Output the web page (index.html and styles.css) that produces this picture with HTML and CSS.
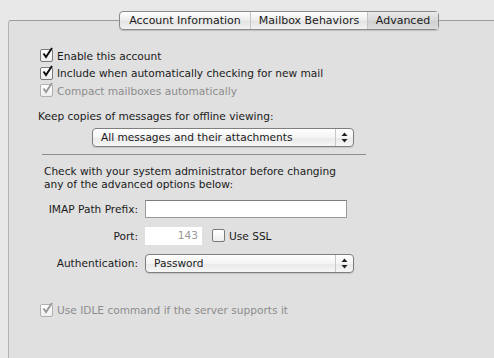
FILE: index.html
```html
<!DOCTYPE html>
<html lang="en">
<head>
    <meta charset="UTF-8">
    <title>Advanced</title>
    <link rel="stylesheet" href="styles.css">
</head>
<body>
    <div class="tabs">
        <div class="tab">Account Information</div>
        <div class="tab">Mailbox Behaviors</div>
        <div class="tab selected">Advanced</div>
    </div>

    <div class="panel">
        <div class="check-list">
            <label class="check">
                <span class="box checked"><svg viewBox="0 0 13 13"><path d="M2.5 6.5 L5 10 L11 1" /></svg></span>
                Enable this account
            </label>
            <label class="check">
                <span class="box checked"><svg viewBox="0 0 13 13"><path d="M2.5 6.5 L5 10 L11 1" /></svg></span>
                Include when automatically checking for new mail
            </label>
            <label class="check disabled">
                <span class="box checked"><svg viewBox="0 0 13 13"><path d="M2.5 6.5 L5 10 L11 1" /></svg></span>
                Compact mailboxes automatically
            </label>
        </div>

        <p class="caption">Keep copies of messages for offline viewing:</p>

        <div class="popup wide">
            <span class="popup-text">All messages and their attachments</span>
            <span class="popup-arrows"><svg viewBox="0 0 7 11"><path d="M3.5 0.5 L6.5 4 L0.5 4 Z M0.5 7 L6.5 7 L3.5 10.5 Z" /></svg></span>
        </div>

        <hr class="separator">

        <p class="note">Check with your system administrator before changing<br>any of the advanced options below:</p>

        <div class="form">
            <div class="row">
                <span class="label">IMAP Path Prefix:</span>
                <span class="field prefix"></span>
            </div>
            <div class="row">
                <span class="label">Port:</span>
                <span class="field port">143</span>
                <label class="check ssl">
                    <span class="box"></span>
                    Use SSL
                </label>
            </div>
            <div class="row">
                <span class="label">Authentication:</span>
                <div class="popup auth">
                    <span class="popup-text">Password</span>
                    <span class="popup-arrows"><svg viewBox="0 0 7 11"><path d="M3.5 0.5 L6.5 4 L0.5 4 Z M0.5 7 L6.5 7 L3.5 10.5 Z" /></svg></span>
                </div>
            </div>
        </div>

        <label class="check disabled idle">
            <span class="box checked"><svg viewBox="0 0 13 13"><path d="M2.5 6.5 L5 10 L11 1" /></svg></span>
            Use IDLE command if the server supports it
        </label>
    </div>
</body>
</html>
```

FILE: styles.css
```css
* {
    margin: 0;
    padding: 0;
    box-sizing: border-box;
}

body {
    background: #e8e8e8;
    font-family: 'DejaVu Sans', sans-serif;
    font-size: 10.6px;
    color: #1a1a1a;
    height: 100vh;
    overflow: hidden;
    display: flex;
    flex-direction: column;
}

.tabs {
    display: flex;
    flex-shrink: 0;
    margin: 11px 0 0 119px;
    width: 320px;
    height: 19px;
    border: 1px solid #8a8a8a;
    border-radius: 4px;
    background: linear-gradient(#ffffff, #ececec 50%, #e2e2e2 51%, #f2f2f2);
    box-shadow: 0 1px 1px rgba(0, 0, 0, 0.15);
    position: relative;
    z-index: 1;
}

.tab {
    display: flex;
    align-items: center;
    justify-content: center;
    border-left: 1px solid #c4c4c4;
    font-size: 11px;
}

.tab:first-child {
    border-left: none;
    width: 130px;
}

.tab:nth-child(2) {
    width: 117px;
}

.tab.selected {
    flex: 1;
    background: linear-gradient(#eaeaea, #d8d8d8 50%, #cfcfcf 51%, #dcdcdc);
}

.panel {
    flex: 1;
    margin: -10px 0 0 8px;
    border-top: 1px solid #9c9c9c;
    border-left: 1px solid #b4b4b4;
    border-top-left-radius: 3px;
    background: #e0e0e0;
    padding: 26px 0 0 31px;
}

.check-list {
    display: flex;
    flex-direction: column;
}

.check {
    display: flex;
    align-items: center;
    gap: 4px;
    height: 17.5px;
}

.check.disabled {
    color: #8c8c8c;
}

.box {
    width: 13px;
    height: 13px;
    border: 1px solid #7a7a7a;
    border-radius: 2px;
    background: linear-gradient(#ffffff, #eeeeee);
    position: relative;
}

.box svg {
    position: absolute;
    left: 0;
    top: -3px;
    width: 13px;
    height: 13px;
    fill: none;
    stroke: #111;
    stroke-width: 2;
}

.disabled .box {
    border-color: #b0b0b0;
}

.disabled .box svg {
    stroke: #9a9a9a;
}

.caption {
    margin-top: 10px;
    line-height: 13px;
    margin-left: -2px;
}

.popup {
    display: flex;
    align-items: center;
    height: 19px;
    border: 1px solid #7e7e7e;
    border-radius: 4px;
    background: linear-gradient(#ffffff, #f4f4f4 50%, #e8e8e8 51%, #f6f6f6);
    box-shadow: 0 1px 1px rgba(0, 0, 0, 0.12);
}

.popup.wide {
    width: 262px;
    margin: 5px 0 0 52px;
}

.popup-text {
    flex: 1;
    padding-left: 8px;
}

.popup-arrows {
    width: 18px;
    height: 100%;
    border-left: 1px solid #c8c8c8;
    display: flex;
    align-items: center;
    justify-content: center;
}

.popup-arrows svg {
    width: 7px;
    height: 11px;
    fill: #222;
}

.separator {
    border: none;
    border-top: 1px solid #8e8e8e;
    width: 324px;
    margin: 7px 0 0 2px;
}

.note {
    margin: 10px 0 0 4px;
    line-height: 13px;
}

.form {
    display: flex;
    flex-direction: column;
    gap: 9px;
    margin-top: 9px;
}

.row {
    display: flex;
    align-items: center;
    gap: 7px;
}

.label {
    width: 98px;
    text-align: right;
}

.field {
    height: 18px;
    background: #fff;
    display: block;
}

.field.prefix {
    width: 202px;
    border: 1px solid #9a9a9a;
    border-top-color: #7c7c7c;
}

.field.port {
    width: 57px;
    color: #999;
    text-align: right;
    padding: 2px 4px 0 0;
}

.check.ssl {
    margin-left: 3px;
}

.popup.auth {
    width: 209px;
}

.check.idle {
    margin-top: 29px;
}
```
